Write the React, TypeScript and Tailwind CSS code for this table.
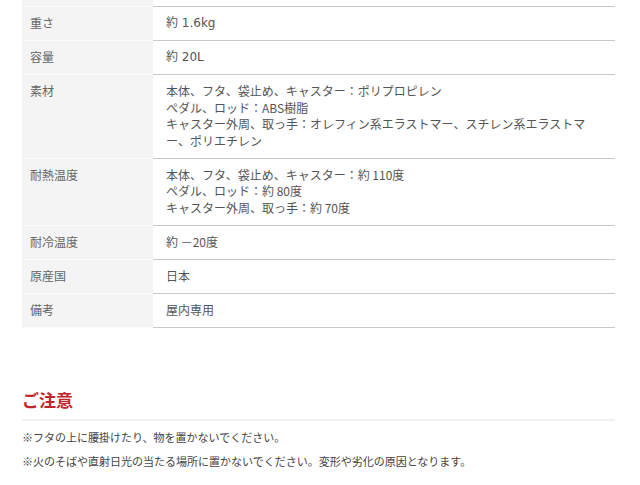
import React from "react";

type Row = { label: string; lines: string[]; latin?: boolean };

const rows: Row[] = [
  { label: "重さ", lines: ["約 1.6kg"], latin: true },
  { label: "容量", lines: ["約 20L"], latin: true },
  {
    label: "素材",
    lines: [
      "本体、フタ、袋止め、キャスター：ポリプロピレン",
      "ペダル、ロッド：ABS樹脂",
      "キャスター外周、取っ手：オレフィン系エラストマー、スチレン系エラストマ",
      "ー、ポリエチレン",
    ],
  },
  {
    label: "耐熱温度",
    lines: [
      "本体、フタ、袋止め、キャスター：約 110度",
      "ペダル、ロッド：約 80度",
      "キャスター外周、取っ手：約 70度",
    ],
  },
  { label: "耐冷温度", lines: ["約 －20度"] },
  { label: "原産国", lines: ["日本"] },
  { label: "備考", lines: ["屋内専用"] },
];

function SpecRow({ row }: { row: Row }) {
  return (
    <div className="flex">
      <div className="w-[131px] shrink-0 bg-[#f4f4f4] border-b border-[#fbfbfb] px-2 pt-[8px] pb-[8.5px] text-[12px] leading-[16.5px] text-[#666]">
        {row.label}
      </div>
      <div
        className={`flex-1 border-b border-[#c9c9c9] pl-[13px] pt-[8px] pb-[8.5px] text-[12px] leading-[16.5px] text-[#555] ${
          row.latin ? "font-['DejaVu_Sans','Noto_Sans_CJK_JP',sans-serif] text-[11.5px]" : ""
        }`}
      >
        {row.lines.map((l, i) => (
          <div key={i}>{l}</div>
        ))}
      </div>
    </div>
  );
}

export default function App() {
  return (
    <div className="w-[640px] h-[485px] overflow-hidden bg-white font-['Noto_Sans_CJK_JP',sans-serif]">
      <div className="ml-[22px] w-[593px]">
        {/* 上の行の残り */}
        <div className="flex h-[7px]">
          <div className="w-[131px] shrink-0 bg-[#f4f4f4] border-b border-[#fbfbfb]" />
          <div className="flex-1 border-b border-[#c9c9c9]" />
        </div>
        {rows.map((r) => (
          <SpecRow key={r.label} row={r} />
        ))}

        <h2 className="mt-[60px] text-[17px] font-bold leading-[24px] text-[#c0272d]">ご注意</h2>
        <div className="mt-[7px] h-[2px] bg-[#f0f0f0]" />
        <div className="mt-[4px] text-[11px] leading-[24px] text-[#444]">
          <p>※フタの上に腰掛けたり、物を置かないでください。</p>
          <p>※火のそばや直射日光の当たる場所に置かないでください。変形や劣化の原因となります。</p>
        </div>
      </div>
    </div>
  );
}
